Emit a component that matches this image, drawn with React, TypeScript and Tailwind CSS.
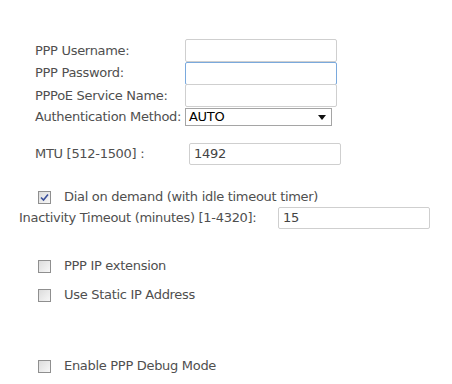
const font = { fontFamily: '"DejaVu Sans", Verdana, sans-serif' };

function Box({ checked = false }: { checked?: boolean }) {
  return (
    <span className="flex h-[13px] w-[13px] items-center justify-center border border-[#8f8f8f] bg-gradient-to-br from-[#dcdcdc] to-[#f7f7f7]">
      {checked && (
        <svg width="9" height="9" viewBox="0 0 9 9">
          <path d="M1 4.5 L3.5 7 L8 1.5" fill="none" stroke="#3a4f9a" strokeWidth="1.6" />
        </svg>
      )}
    </span>
  );
}

function Check({ label, checked }: { label: string; checked?: boolean }) {
  return (
    <div className="flex h-[20px] items-center pl-[38px]">
      <Box checked={checked} />
      <span className="ml-[13px]">{label}</span>
    </div>
  );
}

function Field({ value = "", focus = false, className = "" }: { value?: string; focus?: boolean; className?: string }) {
  return (
    <div
      className={`flex w-[152px] items-center rounded-[2px] border bg-white px-[4px] text-[#444] ${
        focus ? "border-[#7aa9dd]" : "border-[#cfcfcf]"
      } ${className}`}
    >
      {value}
    </div>
  );
}

export default function App() {
  return (
    <div className="h-[384px] w-[452px] bg-white text-[13px] tracking-[-0.3px] text-[#4f4f4f]" style={font}>
      <div className="pt-[39px]">
        <div className="flex h-[23px] items-center pl-[35px]">
          <span className="w-[150px]">PPP Username:</span>
          <Field className="h-[23px]" />
        </div>
        <div className="flex h-[22px] items-center pl-[35px]">
          <span className="w-[150px]">PPP Password:</span>
          <Field className="h-[23px]" focus />
        </div>
        <div className="flex h-[23px] items-center pl-[35px]">
          <span className="w-[150px]">PPPoE Service Name:</span>
          <Field className="h-[23px]" />
        </div>
        <div className="mt-px flex h-[18px] items-center pl-[35px]">
          <span className="w-[150px]">Authentication Method:</span>
          <div className="flex h-[18px] w-[147px] items-center justify-between border border-[#a5a5a5] bg-white pl-[3px] pr-[5px] text-black">
            <span>AUTO</span>
            <svg width="8" height="5" viewBox="0 0 8 5">
              <path d="M0 0 H8 L4 5 Z" fill="#111" />
            </svg>
          </div>
        </div>

        <div className="mt-[17px] flex h-[22px] items-center pl-[35px]">
          <span className="w-[154px]">MTU [512-1500] :</span>
          <Field value="1492" className="h-[22px]" />
        </div>

        <div className="mt-[22px]">
          <Check label="Dial on demand (with idle timeout timer)" checked />
        </div>
        <div className="flex h-[22px] items-center pl-[19px]">
          <span className="w-[259px]">Inactivity Timeout (minutes) [1-4320]:</span>
          <Field value="15" className="h-[22px]" />
        </div>

        <div className="mt-[27px]">
          <Check label="PPP IP extension" />
        </div>
        <div className="mt-[9px]">
          <Check label="Use Static IP Address" />
        </div>
        <div className="mt-[51px]">
          <Check label="Enable PPP Debug Mode" />
        </div>
      </div>
    </div>
  );
}
